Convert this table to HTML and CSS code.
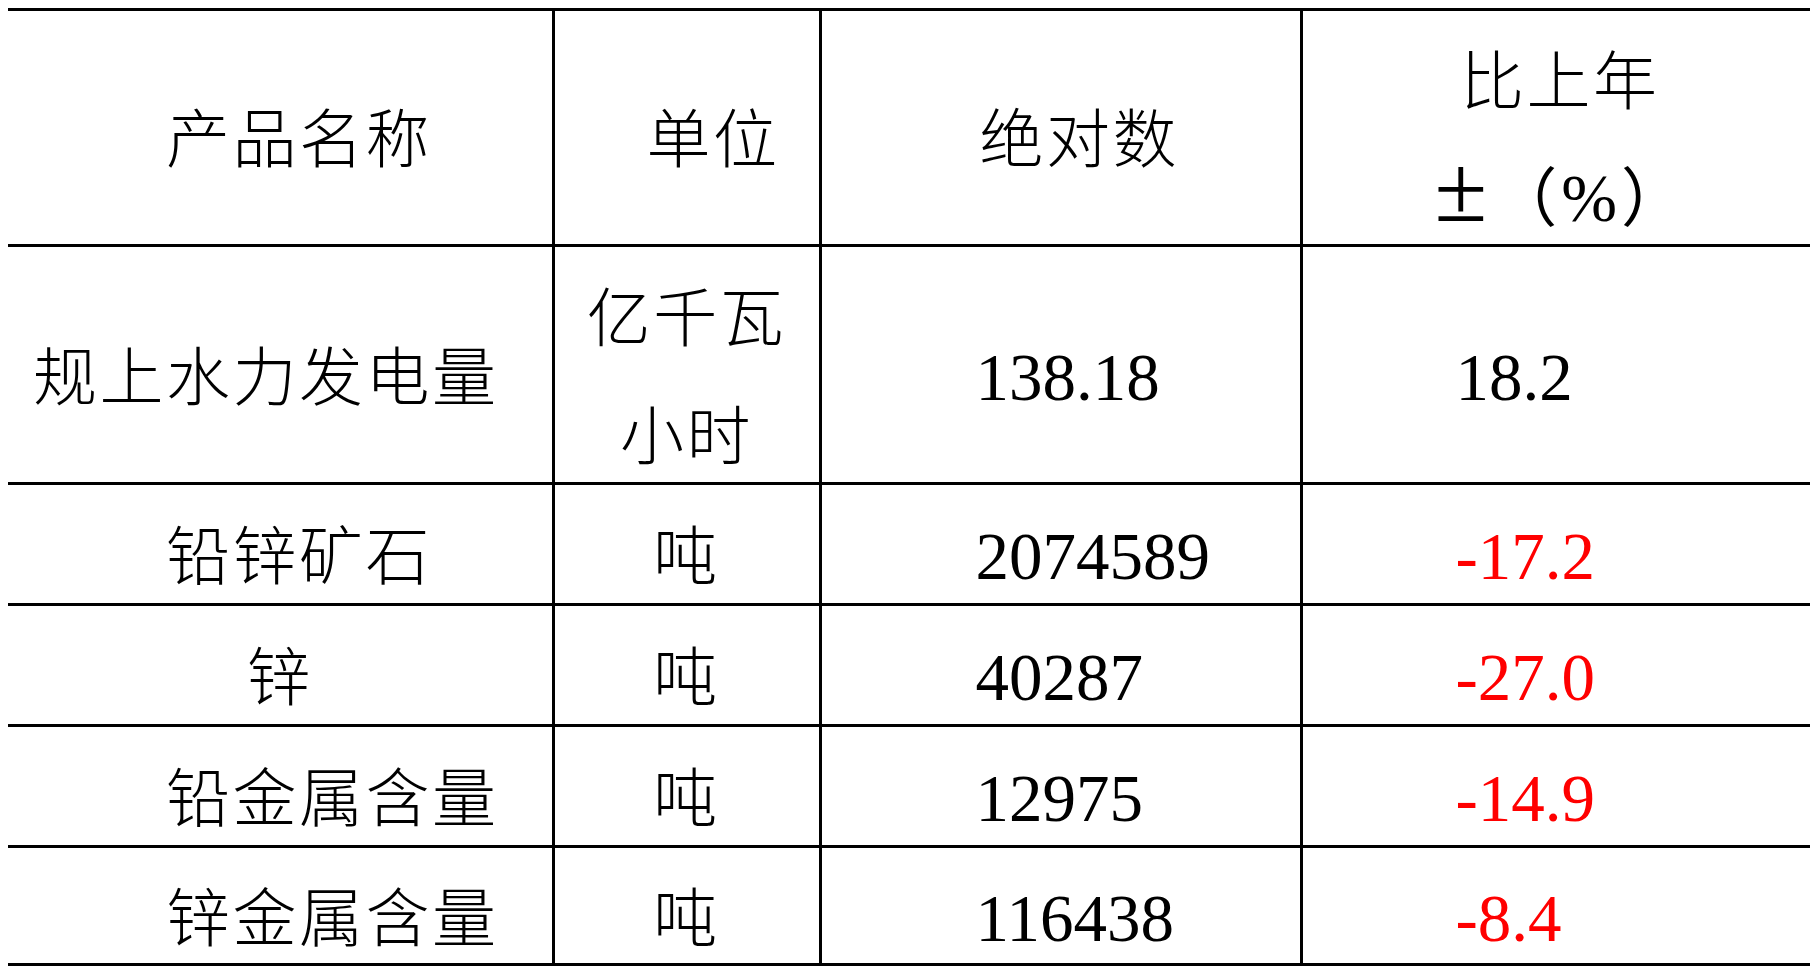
FILE: index.html
```html
<!DOCTYPE html>
<html lang="zh-CN">
<head>
<meta charset="utf-8">
<title>主要工业产品产量</title>
<link rel="stylesheet" href="styles.css">
</head>
<body>
<table class="stats">
  <colgroup>
    <col class="c1"><col class="c2"><col class="c3"><col class="c4">
  </colgroup>
  <thead>
    <tr class="head">
      <th class="name"><span class="t cjk">产品名称</span></th>
      <th class="unit-head"><span class="t cjk">单位</span></th>
      <th class="num-head"><span class="t cjk">绝对数</span></th>
      <th class="pct-head"><span class="t"><span class="cjk">比上年</span><br><span class="pm">±</span>（<span class="pc">%</span>）</span></th>
    </tr>
  </thead>
  <tbody>
    <tr class="tall">
      <td class="name wide"><span class="t cjk">规上水力发电量</span></td>
      <td class="unit"><span class="t cjk">亿千瓦<br>小时</span></td>
      <td class="num"><span class="t">138.18</span></td>
      <td class="pct"><span class="t">18.2</span></td>
    </tr>
    <tr>
      <td class="name"><span class="t cjk">铅锌矿石</span></td>
      <td class="unit"><span class="t cjk">吨</span></td>
      <td class="num"><span class="t">2074589</span></td>
      <td class="pct neg"><span class="t">-17.2</span></td>
    </tr>
    <tr>
      <td class="name center"><span class="t cjk">锌</span></td>
      <td class="unit"><span class="t cjk">吨</span></td>
      <td class="num"><span class="t">40287</span></td>
      <td class="pct neg"><span class="t">-27.0</span></td>
    </tr>
    <tr>
      <td class="name"><span class="t cjk">铅金属含量</span></td>
      <td class="unit"><span class="t cjk">吨</span></td>
      <td class="num"><span class="t">12975</span></td>
      <td class="pct neg"><span class="t">-14.9</span></td>
    </tr>
    <tr class="last">
      <td class="name"><span class="t cjk">锌金属含量</span></td>
      <td class="unit"><span class="t cjk">吨</span></td>
      <td class="num"><span class="t">116438</span></td>
      <td class="pct neg"><span class="t">-8.4</span></td>
    </tr>
  </tbody>
</table>
</body>
</html>
```

FILE: styles.css
```css
html, body {
  overflow: hidden;
}

body {
  margin: 8px;
  background: #ffffff;
  color: #000000;
  font-family: "Liberation Serif", "Noto Sans CJK SC", serif;
  font-size: 64px;
}

.stats {
  table-layout: fixed;
  width: 1809px;
  border-collapse: collapse;
  border-top: 3px solid #000;
  border-bottom: 3px solid #000;
}

.c1 { width: 545px; }
.c2 { width: 267px; }
.c3 { width: 481px; }
.c4 { width: 516px; }

.stats th,
.stats td {
  padding: 0;
  font-weight: normal;
  text-align: left;
  vertical-align: middle;
  white-space: nowrap;
  line-height: 118px;
  border: 3px solid #000;
}

.stats th:first-child,
.stats td:first-child {
  border-left: none;
}

.stats th:last-child,
.stats td:last-child {
  border-right: none;
}

.stats .head th {
  line-height: 116.5px;
}

.stats .tall td {
  line-height: 117.5px;
}

.stats .last td {
  line-height: 115px;
}

.t {
  line-height: 1;
  vertical-align: -14px;
}

.cjk {
  font-family: "Noto Sans CJK SC", "Liberation Serif", sans-serif;
  font-weight: 300;
  letter-spacing: 2.5px;
}

.pm {
  font-size: 96px;
  line-height: 0;
  margin-right: 6px;
}

.pc {
  font-size: 67px;
  margin: 0 4px;
}

.stats .name { padding-left: 158px; }
.stats .name.wide { padding-left: 25px; }
.stats .name.center { padding-left: 0; text-align: center; }

.stats .unit { text-align: center; }
.stats .unit-head { padding-left: 92px; }

.stats .num { padding-left: 154px; }
.stats .num-head { padding-left: 158px; }

.stats .pct { padding-left: 153px; }
.stats .pct-head { text-align: center; }

.stats .num .t,
.stats .pct .t {
  font-size: 67px;
}

.stats .neg { color: #ff0000; }
```
